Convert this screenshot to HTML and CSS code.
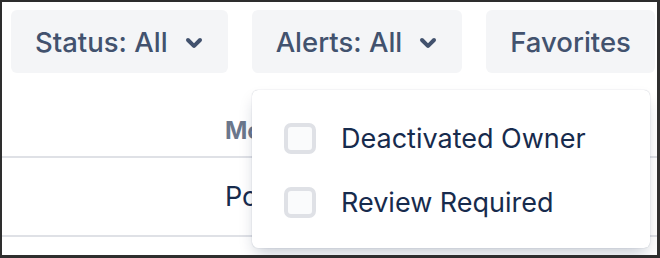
FILE: index.html
```html
<!DOCTYPE html>
<html lang="en">
<head>
<meta charset="UTF-8" />
<title>Filters</title>
<link rel="stylesheet" href="styles.css">
</head>
<body>
  <div class="frame">
    <div class="toolbar">
      <button class="btn btn-dd" type="button">
        <span>Status: All</span>
        <svg class="chevron" viewBox="0 0 24 24" aria-hidden="true"><path d="M8.292 10.293a1.009 1.009 0 000 1.419l2.939 2.965c.218.215.5.322.779.322s.556-.107.769-.322l2.93-2.955a1.01 1.01 0 000-1.419.987.987 0 00-1.406 0l-2.298 2.317-2.307-2.327a.99.99 0 00-1.406 0z"/></svg>
      </button>
      <button class="btn btn-dd" type="button">
        <span>Alerts: All</span>
        <svg class="chevron" viewBox="0 0 24 24" aria-hidden="true"><path d="M8.292 10.293a1.009 1.009 0 000 1.419l2.939 2.965c.218.215.5.322.779.322s.556-.107.769-.322l2.93-2.955a1.01 1.01 0 000-1.419.987.987 0 00-1.406 0l-2.298 2.317-2.307-2.327a.99.99 0 00-1.406 0z"/></svg>
      </button>
      <button class="btn" type="button">Favorites</button>
    </div>

    <div class="table">
      <div class="row head">
        <div></div>
        <div class="cell">Modified</div>
      </div>
      <div class="row body-row">
        <div></div>
        <div class="cell">Policy</div>
      </div>
    </div>

    <div class="menu" role="menu" aria-label="Alerts">
      <label class="menu-item">
        <span class="check"></span>
        <span>Deactivated Owner</span>
      </label>
      <label class="menu-item">
        <span class="check"></span>
        <span>Review Required</span>
      </label>
    </div>
  </div>
</body>
</html>
```

FILE: styles.css
```css
html, body {
  margin: 0;
  padding: 0;
  background: #fff;
}
.frame {
  position: relative;
  width: 660px;
  height: 258px;
  box-sizing: border-box;
  border: 2px solid #2e2e2e;
  border-right-width: 3px;
  border-bottom-width: 3px;
  overflow: hidden;
  font-family: Inter, "Liberation Sans", sans-serif;
}
.toolbar {
  display: flex;
  gap: 24px;
  padding: 8px 0 0 9px;
}
.btn {
  display: flex;
  align-items: center;
  height: 63px;
  padding: 0 24px;
  border: none;
  border-radius: 6px;
  background: #f4f5f7;
  color: #42526e;
  font-family: inherit;
  font-size: 27.5px;
  font-weight: 500;
  white-space: nowrap;
}
.btn-dd {
  padding-right: 10px;
}
.chevron {
  width: 48px;
  height: 48px;
  margin-left: 2px;
  fill: #42526e;
}
.row {
  display: grid;
  grid-template-columns: 223px 1fr;
  border-bottom: 2px solid #dfe1e6;
}
.head {
  height: 83px;
  align-items: end;
}
.head .cell {
  font-size: 24px;
  font-weight: 700;
  color: #6b778c;
  line-height: 24px;
  padding-bottom: 13px;
}
.body-row {
  height: 77px;
  align-items: center;
}
.body-row .cell {
  font-size: 27px;
  color: #172b4d;
}
.menu {
  position: absolute;
  left: 250px;
  top: 88px;
  width: 398px;
  height: 158px;
  box-sizing: border-box;
  padding: 16px 0 14px;
  background: #fff;
  border-radius: 6px;
  box-shadow: 0 8px 16px -4px rgba(9, 30, 66, 0.25), 0 0 1px rgba(9, 30, 66, 0.31);
}
.menu-item {
  display: flex;
  align-items: center;
  gap: 25px;
  height: 64px;
  padding-left: 32px;
  font-size: 27px;
  color: #172b4d;
}
.check {
  width: 32px;
  height: 31px;
  box-sizing: border-box;
  border: 4px solid #dfe1e6;
  border-radius: 7px;
  background: #fafbfc;
}
```
